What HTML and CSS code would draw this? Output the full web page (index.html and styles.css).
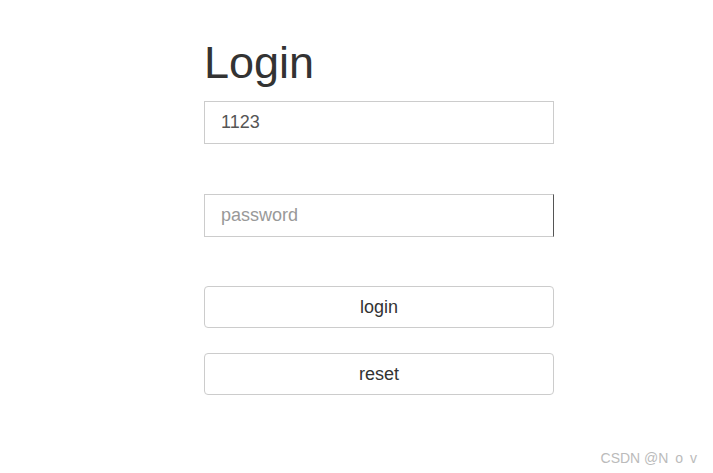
FILE: index.html
```
<!DOCTYPE html>
<html>
<head>
<meta charset="utf-8">
<link rel="stylesheet" href="styles.css">
</head>
<body>
<div class="login">
  <h1 class="title">Login</h1>
  <input class="field" type="text" value="1123">
  <input class="field field-pass" type="password" placeholder="password">
  <button class="btn btn-first">login</button>
  <button class="btn">reset</button>
</div>
<div class="mark">CSDN @<span class="mark-name">N o v</span></div>
</body>
</html>
```
FILE: styles.css
```
html, body {
  margin: 0;
  padding: 0;
  background: #fff;
  font-family: "Liberation Sans", Arial, sans-serif;
}
.login {
  width: 350px;
  margin-left: 204px;
  display: flex;
  flex-direction: column;
}
.title {
  margin: 39px 0 0 0;
  height: 62px;
  font-size: 45px;
  line-height: 48px;
  font-weight: 500;
  color: #333;
}
.field {
  box-sizing: border-box;
  height: 43px;
  width: 350px;
  margin: 0;
  padding: 0 16px;
  border: 1px solid #ccc;
  border-radius: 0;
  font-family: "Liberation Sans", Arial, sans-serif;
  font-size: 18px;
  color: #555;
  outline: none;
  background: #fff;
}
.field::placeholder {
  color: #999;
}
.field-pass {
  margin-top: 50px;
  border-right-color: #555;
}
.btn {
  box-sizing: border-box;
  height: 42px;
  width: 350px;
  margin: 25px 0 0 0;
  border: 1px solid #ccc;
  border-radius: 4px;
  background: #fff;
  font-family: "Liberation Sans", Arial, sans-serif;
  font-size: 18px;
  color: #333;
  padding: 0;
}
.btn-first {
  margin-top: 49px;
}
.mark {
  position: absolute;
  right: 16px;
  bottom: 7px;
  font-size: 14px;
  color: #bbb;
  font-family: "Liberation Sans", Arial, sans-serif;
}
.mark-name {
  word-spacing: 3px;
}
```
